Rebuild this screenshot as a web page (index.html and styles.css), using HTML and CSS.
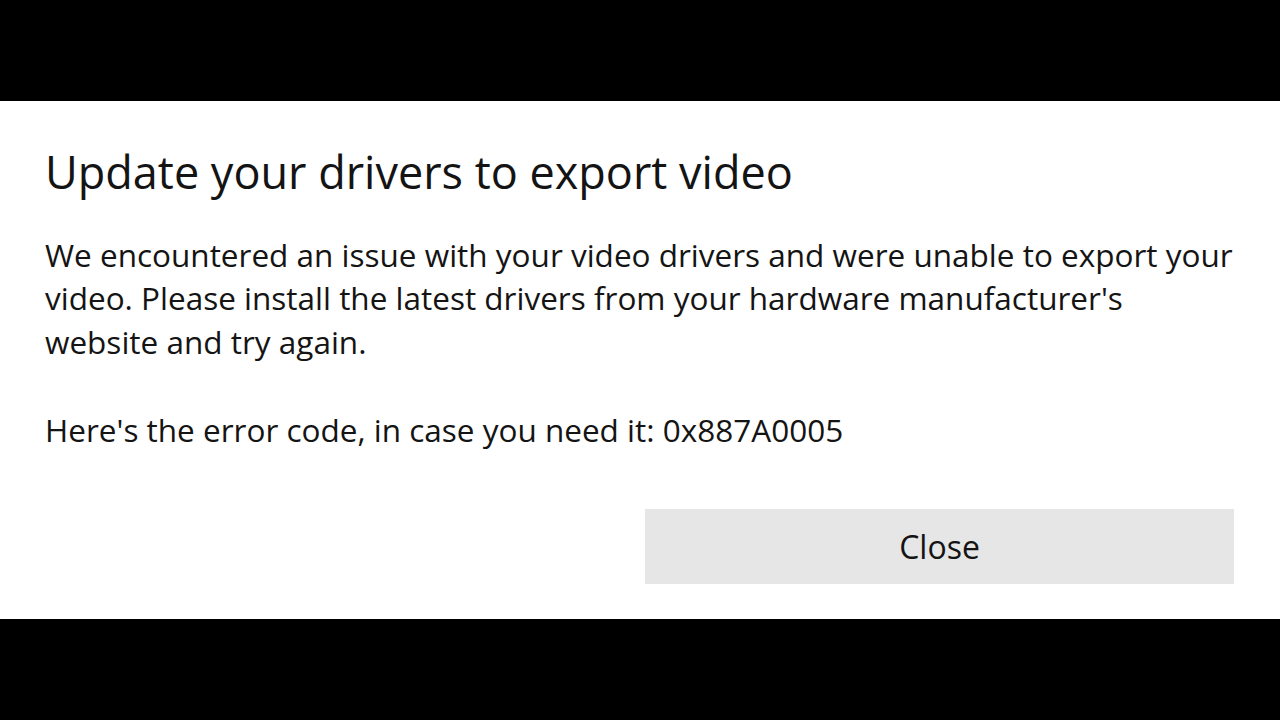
FILE: index.html
```html
<!DOCTYPE html>
<html>
<head>
<meta charset="utf-8">
<link rel="stylesheet" href="styles.css">
</head>
<body>
<div class="screen">
  <div class="bar"></div>
  <div class="dialog">
    <h1 class="title">Update your drivers to export video</h1>
    <p class="msg">We encountered an issue with your video drivers and were unable to export your<br>video. Please install the latest drivers from your hardware manufacturer's<br>website and try again.</p>
    <p class="code">Here's the error code, in case you need it: 0x887A0005</p>
    <div class="actions">
      <button class="btn">Close</button>
    </div>
  </div>
  <div class="bar"></div>
</div>
</body>
</html>
```
FILE: styles.css
```css
html, body {
  margin: 0;
  padding: 0;
  background: #000;
}
.screen {
  width: 1280px;
  height: 720px;
  display: flex;
  flex-direction: column;
  font-family: "Open Sans", "Noto Sans", sans-serif;
  color: #141414;
}
.bar {
  height: 101px;
  background: #000;
  flex: none;
}
.dialog {
  flex: 1;
  background: #fff;
  padding: 0 46px 0 45px;
  display: flex;
  flex-direction: column;
}
.title {
  margin: 40.5px 0 0 0;
  font-size: 45px;
  font-weight: 400;
  line-height: 60px;
  white-space: nowrap;
}
.msg {
  margin: 31px 0 0 0;
  font-size: 31.5px;
  line-height: 43.5px;
  white-space: nowrap;
}
.code {
  margin: 45px 0 0 0;
  font-size: 31.5px;
  line-height: 43.5px;
  white-space: nowrap;
}
.actions {
  display: flex;
  justify-content: flex-end;
  margin-top: 57px;
}
.btn {
  width: 589px;
  height: 75px;
  border: none;
  background: #e6e6e6;
  font-family: inherit;
  font-size: 32px;
  color: #141414;
  padding: 0;
}
```
